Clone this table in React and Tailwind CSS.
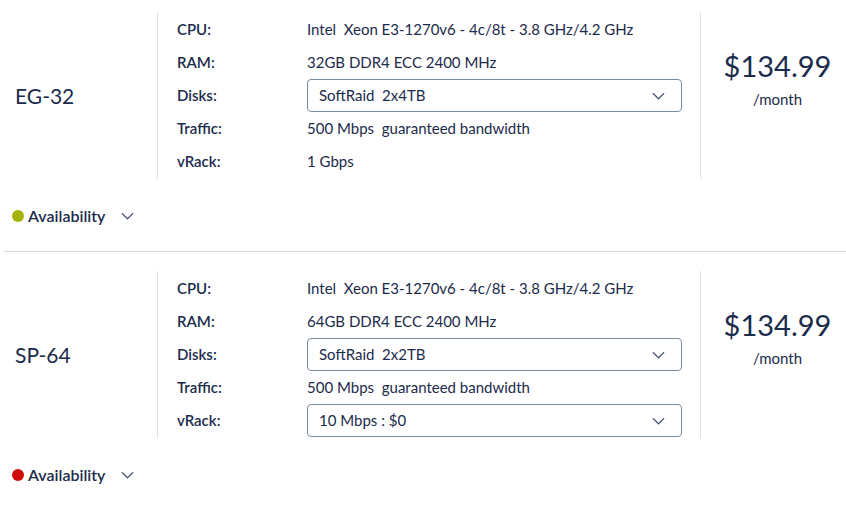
import { useState } from "react";

const products = [
  {
    name: "EG-32",
    cpu: "Intel  Xeon E3-1270v6 - 4c/8t - 3.8 GHz/4.2 GHz",
    ram: "32GB DDR4 ECC 2400 MHz",
    disks: "SoftRaid  2x4TB",
    traffic: "500 Mbps  guaranteed bandwidth",
    vrack: "1 Gbps",
    vrackSelect: false,
    price: "$134.99",
    dot: "bg-[#a4b40a]",
  },
  {
    name: "SP-64",
    cpu: "Intel  Xeon E3-1270v6 - 4c/8t - 3.8 GHz/4.2 GHz",
    ram: "64GB DDR4 ECC 2400 MHz",
    disks: "SoftRaid  2x2TB",
    traffic: "500 Mbps  guaranteed bandwidth",
    vrack: "10 Mbps : $0",
    vrackSelect: true,
    price: "$134.99",
    dot: "bg-[#d10a0a]",
  },
];

function Chevron({ className }) {
  return (
    <svg viewBox="0 0 14 8" className={className} fill="none" stroke="currentColor" strokeWidth="1.3">
      <path d="M1 1l6 6 6-6" />
    </svg>
  );
}

function FakeSelect({ value }) {
  return (
    <div className="flex items-center justify-between w-[375px] h-[33px] border border-[#7a8ba0] rounded-[4px] pl-[11px] pr-[16px] bg-white">
      <span className="whitespace-pre">{value}</span>
      <Chevron className="w-[13px] h-[8px] text-[#4a5a72]" />
    </div>
  );
}

function Row({ label, children }) {
  return (
    <div className="flex items-center h-[33px]">
      <span className="w-[130px] font-semibold">{label}</span>
      <div className="flex-1 whitespace-pre">{children}</div>
    </div>
  );
}

function Product({ p }) {
  const [open, setOpen] = useState(false);
  return (
    <div>
      <div className="flex">
        <div className="w-[157px] flex items-center pl-[15px] text-[21px]">{p.name}</div>
        <div className="w-[544px] border-l border-r border-[#dfe3e6] py-[1px] pl-[19px]">
          <Row label="CPU:">{p.cpu}</Row>
          <Row label="RAM:">{p.ram}</Row>
          <Row label="Disks:">
            <FakeSelect value={p.disks} />
          </Row>
          <Row label="Traffic:">{p.traffic}</Row>
          <Row label="vRack:">{p.vrackSelect ? <FakeSelect value={p.vrack} /> : p.vrack}</Row>
        </div>
        <div className="flex-1 flex flex-col items-center pl-[8px] pt-[37px]">
          <span className="text-[29px] leading-[34px]">{p.price}</span>
          <span className="text-[15px] leading-[20px] mt-[6px]">/month</span>
        </div>
      </div>
      <button
        onClick={() => setOpen((v) => !v)}
        className="flex items-center h-[20px] mt-[27px] pl-[12px] font-semibold text-[16px]"
      >
        <span className={`w-[12px] h-[12px] rounded-full ${p.dot}`} />
        <span className="ml-[4px]">Availability</span>
        <Chevron className="ml-[16px] w-[13px] h-[8px] text-[#4a5a72]" />
      </button>
    </div>
  );
}

export default function App() {
  return (
    <div
      className="w-[846px] h-[505px] bg-white text-[#1b2b4c] text-[15px] overflow-hidden pt-[12px]"
      style={{ fontFamily: "Lato, 'Noto Sans', sans-serif" }}
    >
      <Product p={products[0]} />
      <div className="ml-[4px] mt-[25px] mb-[19px] h-px bg-[#d6dbde]" />
      <Product p={products[1]} />
    </div>
  );
}
